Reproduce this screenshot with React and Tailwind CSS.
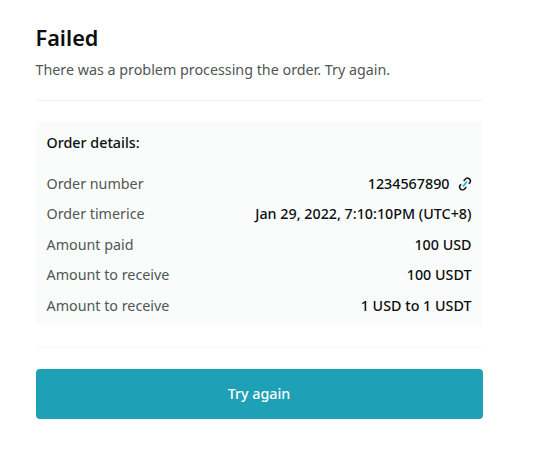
import clsx from "clsx";

const orderRows = [
  { label: "Order number", value: "1234567890", link: true },
  { label: "Order timerice", value: "Jan 29, 2022, 7:10:10PM (UTC+8)" },
  { label: "Amount paid", value: "100 USD" },
  { label: "Amount to receive", value: "100 USDT" },
  { label: "Amount to receive", value: "1 USD to 1 USDT" },
];

// Two-tone chain link
function LinkIcon({ className }) {
  return (
    <svg
      viewBox="0 0 24 24"
      fill="none"
      strokeWidth="2.4"
      className={clsx("h-3.5 w-3.5 overflow-visible", className)}
    >
      <g transform="rotate(-50 12 12)">
        <path d="M14.500 7h4a5 5 0 0 1 0 10h-2" stroke="#111" />
        <path d="M9.500 17h-4a5 5 0 0 1 0-10h2" stroke="#111" />
        <path d="M6.500 12h11" stroke="#1fb4d0" strokeWidth="3" />
      </g>
    </svg>
  );
}

export default function App() {
  return (
    <main className="h-[464px] w-full bg-white pt-[22px] pl-[35.500px] font-['Noto_Sans',sans-serif] text-[#0d0f0f]">
      <h1 className="text-[21.700px] leading-8 font-semibold">Failed</h1>
      <p className="mt-[6px] text-[14.300px] leading-5 text-[#505655]">
        There was a problem processing the order. Try again.
      </p>

      <div className="mt-[20px] w-[447px] border-t border-[#f3f4f4]" />

      <section className="mt-[21px] h-[203px] w-[447px] bg-[#fafcfc] px-[11px] pt-[11px]">
        <h2 className="text-[14.300px] leading-5 font-medium">
          Order details:
        </h2>
        <dl className="mt-[15.500px]">
          {orderRows.map((row, i) => (
            <div
              key={i}
              className="flex h-[30.400px] items-center justify-between text-[14.300px]"
            >
              <dt className="text-[#505655]">{row.label}</dt>
              <dd className="flex items-center font-medium">
                {row.value}
                {row.link && <LinkIcon className="ml-2" />}
              </dd>
            </div>
          ))}
        </dl>
      </section>

      <div className="mt-[22px] w-[447px] border-t border-[#f6f7f7]" />

      <button className="mt-[21px] h-[50px] w-[447px] rounded bg-[#1ea0b6] pb-px text-[14.300px] font-medium text-white">
        Try again
      </button>
    </main>
  );
}
